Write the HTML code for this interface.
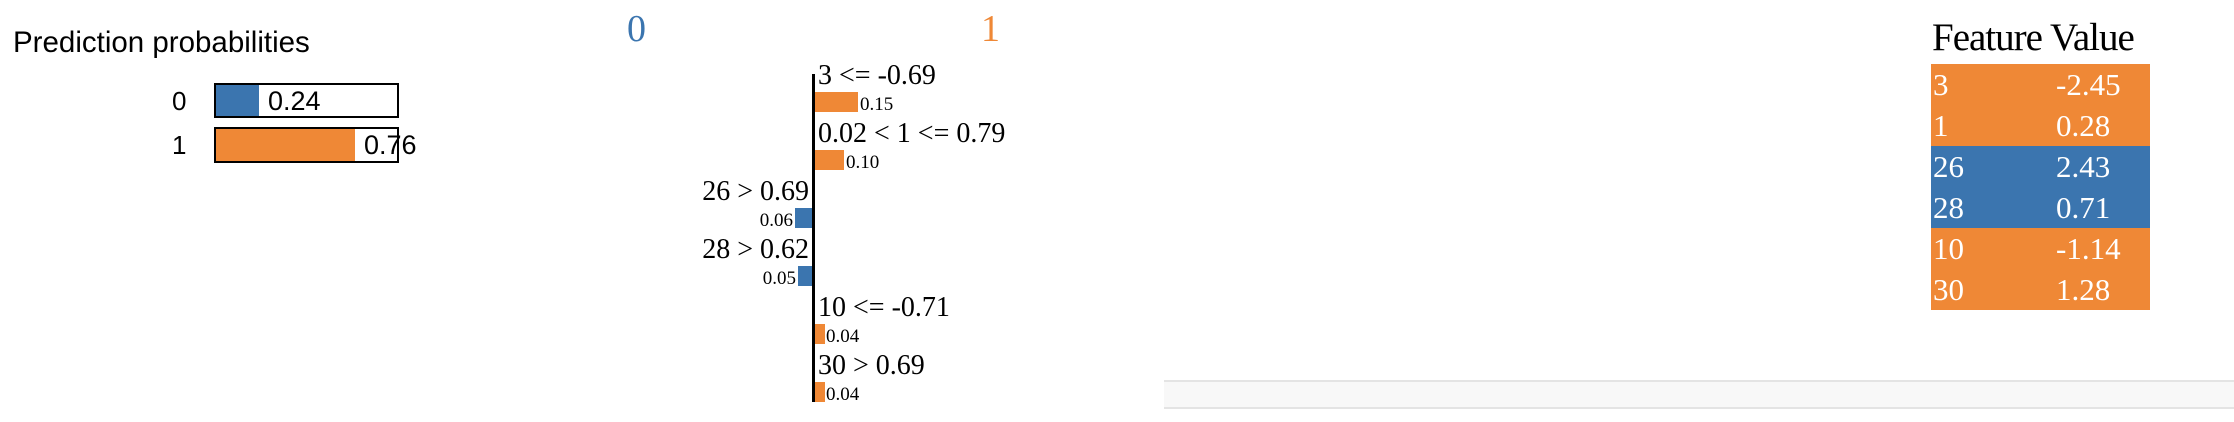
<!DOCTYPE html>
<html><head><meta charset="utf-8"><style>
body{margin:0;width:2234px;height:422px;background:#fff;position:relative;overflow:hidden}
div,span{position:absolute}
.s{font-family:"Liberation Sans",sans-serif;color:#000}
.t{font-family:"Liberation Serif",serif;color:#000;white-space:nowrap}
.o{background:#ef8836}.b{background:#3b75af}
</style></head><body>
<div class="s" style="left:13px;top:26px;font-size:29.5px;line-height:34px">Prediction probabilities</div>

<div class="s" style="left:172px;top:86px;font-size:26px;line-height:30px">0</div>
<div style="left:214px;top:83px;width:181px;height:31px;border:2px solid #000"></div>
<div class="b" style="left:216px;top:85px;width:43px;height:31px"></div>
<div class="s" style="left:268px;top:86px;font-size:27px;line-height:30px">0.24</div>

<div class="s" style="left:172px;top:130px;font-size:26px;line-height:30px">1</div>
<div style="left:214px;top:127px;width:181px;height:32px;border:2px solid #000"></div>
<div class="o" style="left:216px;top:129px;width:139px;height:32px"></div>
<div class="s" style="left:364px;top:130px;font-size:27px;line-height:30px">0.76</div>

<div class="t" style="left:627px;top:9px;font-size:38px;line-height:40px;color:#3b75af">0</div>
<div class="t" style="left:981px;top:9px;font-size:38px;line-height:40px;color:#ef8836">1</div>

<div style="left:812px;top:74px;width:3px;height:328px;background:#000"></div>

<div class="t" style="left:818px;top:61px;font-size:28px;line-height:30px">3 &lt;= -0.69</div>
<div class="o" style="left:815px;top:92px;width:43px;height:20px"></div>
<div class="t" style="left:860px;top:95px;font-size:19px;line-height:20px">0.15</div>

<div class="t" style="left:818px;top:119px;font-size:28px;line-height:30px">0.02 &lt; 1 &lt;= 0.79</div>
<div class="o" style="left:815px;top:150px;width:29px;height:20px"></div>
<div class="t" style="left:846px;top:153px;font-size:19px;line-height:20px">0.10</div>

<div class="t" style="right:1425px;top:177px;font-size:28px;line-height:30px">26 &gt; 0.69</div>
<div class="b" style="left:795px;top:208px;width:17px;height:20px"></div>
<div class="t" style="right:1441px;top:211px;font-size:19px;line-height:20px">0.06</div>

<div class="t" style="right:1425px;top:235px;font-size:28px;line-height:30px">28 &gt; 0.62</div>
<div class="b" style="left:798px;top:266px;width:14px;height:20px"></div>
<div class="t" style="right:1438px;top:269px;font-size:19px;line-height:20px">0.05</div>

<div class="t" style="left:818px;top:293px;font-size:28px;line-height:30px">10 &lt;= -0.71</div>
<div class="o" style="left:815px;top:324px;width:10px;height:20px"></div>
<div class="t" style="left:826px;top:327px;font-size:19px;line-height:20px">0.04</div>

<div class="t" style="left:818px;top:351px;font-size:28px;line-height:30px">30 &gt; 0.69</div>
<div class="o" style="left:815px;top:382px;width:10px;height:20px"></div>
<div class="t" style="left:826px;top:385px;font-size:19px;line-height:20px">0.04</div>

<div class="t" style="left:1932px;top:17px;font-size:39px;line-height:42px;letter-spacing:-1px">Feature Value</div>
<div style="left:1931px;top:64px;width:219px;height:246px">
<div class="o" style="left:0;top:0;width:219px;height:82px"></div>
<div class="b" style="left:0;top:82px;width:219px;height:82px"></div>
<div class="o" style="left:0;top:164px;width:219px;height:82px"></div>
</div>
<div class="t" style="left:1933px;top:64px;font-size:31px;line-height:41px;color:#fff">3<br>1<br>26<br>28<br>10<br>30</div>
<div class="t" style="left:2056px;top:64px;font-size:31px;line-height:41px;color:#fff">-2.45<br>0.28<br>2.43<br>0.71<br>-1.14<br>1.28</div>

<div style="left:1164px;top:380px;width:1070px;height:25px;background:#f8f8f8;border-top:2px solid #e4e4e4;border-bottom:2px solid #e4e4e4"></div>
</body></html>
